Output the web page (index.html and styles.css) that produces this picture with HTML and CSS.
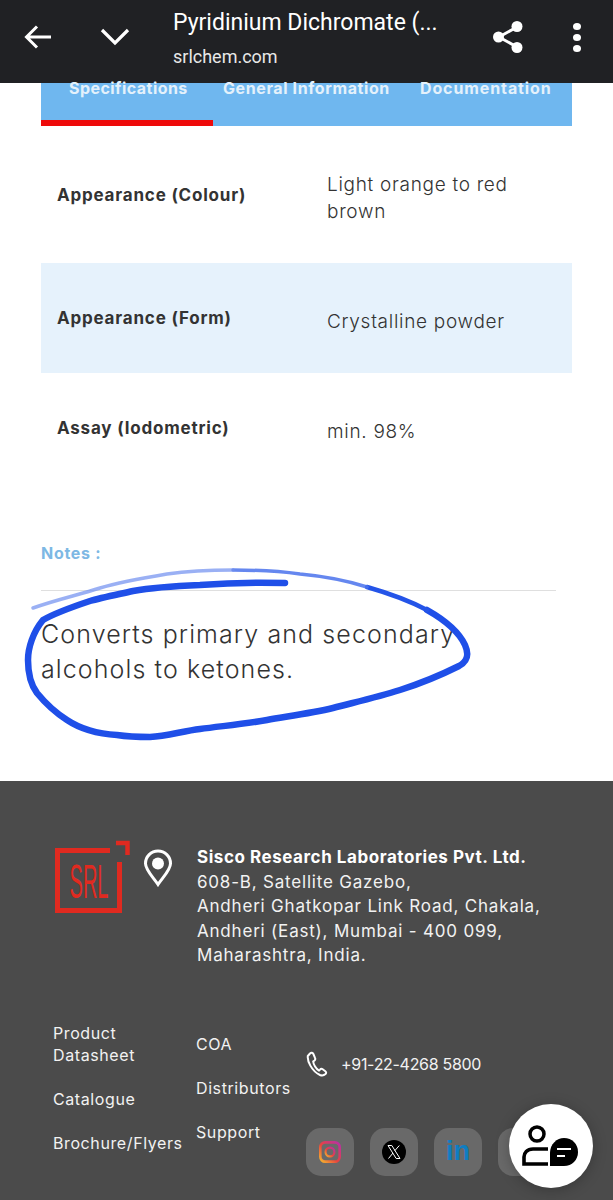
FILE: index.html
```html
<!DOCTYPE html>
<html>
<head>
    <meta charset="UTF-8">
    <meta name="viewport" content="width=device-width, initial-scale=1.0">
    <title>Pyridinium Dichromate</title>
    <link rel="stylesheet" href="styles.css">
</head>
<body>
    <!-- browser toolbar -->
    <header class="toolbar">
        <svg class="tool-back" width="30" height="30" viewBox="0 0 30 30"><path d="M27 15H3M13 4.500 2.500 15 13 25.500" fill="none" stroke="#fff" stroke-width="3"/></svg>
        <svg class="tool-chevron" width="30" height="20" viewBox="0 0 30 20"><path d="M2 3 15 16 28 3" fill="none" stroke="#fff" stroke-width="3.200"/></svg>
        <div class="tool-title">
            <div class="tool-name">Pyridinium Dichromate (...</div>
            <div class="tool-host">srlchem.com</div>
        </div>
        <svg class="tool-share" width="32" height="34" viewBox="0 0 32 34"><path d="M25 7 7 17 25 27" fill="none" stroke="#fff" stroke-width="3"/><circle cx="25" cy="6.500" r="5.500" fill="#fff"/><circle cx="6.500" cy="17" r="5.500" fill="#fff"/><circle cx="25" cy="27.500" r="5.500" fill="#fff"/></svg>
        <div class="tool-dots"><i></i><i></i><i></i></div>
    </header>

    <main class="content">
        <nav class="tabs">
            <a class="tab tab-active">Specifications</a>
            <a class="tab tab-info">General Information</a>
            <a class="tab tab-docs">Documentation</a>
        </nav>

        <div class="spec-row spec-first">
            <div class="spec-label">Appearance (Colour)</div>
            <div class="spec-value">Light orange to red brown</div>
        </div>
        <div class="spec-row spec-alt">
            <div class="spec-label">Appearance (Form)</div>
            <div class="spec-value">Crystalline powder</div>
        </div>
        <div class="spec-row">
            <div class="spec-label">Assay (Iodometric)</div>
            <div class="spec-value">min. 98%</div>
        </div>

        <section class="notes">
            <h4>Notes :</h4>
            <p>Converts primary and secondary alcohols to ketones.</p>
        </section>
    </main>

    <footer class="footer">
        <div class="foot-top">
            <svg class="logo" width="78" height="76" viewBox="0 0 78 76">
                <path d="M57 10.500H4.500V70.500H66.500V22" fill="none" stroke="#e02a20" stroke-width="5"/>
                <path d="M63 3H74.500V15" fill="none" stroke="#e02a20" stroke-width="4.500"/>
                <text class="logo-text" x="36" y="24" text-anchor="middle" transform="scale(1 2.400)">SRL</text>
            </svg>
            <svg class="pin" width="30" height="38" viewBox="0 0 30 38"><path d="M15 35.500C10 28 2.500 21 2.500 14.500a12.500 12.500 0 0 1 25 0C27.500 21 20 28 15 35.500Z" fill="none" stroke="#fff" stroke-width="3"/><circle cx="15" cy="14.500" r="6" fill="#fff"/></svg>
            <address class="address">
                <strong>Sisco Research Laboratories Pvt. Ltd.</strong>
                608-B, Satellite Gazebo,<br>
                Andheri Ghatkopar Link Road, Chakala,<br>
                Andheri (East), Mumbai - 400 099,<br>
                Maharashtra, India.
            </address>
        </div>

        <div class="foot-bottom">
            <div class="links links-one">
                <a>Product<br>Datasheet</a>
                <a>Catalogue</a>
                <a>Brochure/Flyers</a>
            </div>
            <div class="links links-two">
                <a>COA</a>
                <a>Distributors</a>
                <a>Support</a>
            </div>
            <div class="contact">
                <div class="phone">
                    <svg width="22" height="26" viewBox="0 0 22 26"><path d="M4 2.500 1.800 5C1.200 10 5.500 20 14 24c2 .8 4 .4 5.500-1 1-1 .8-2-.2-2.800l-2.600-1.900c-1-.7-2-.5-2.700.3l-1 1C10 18 7.500 13.500 7.200 10.500l1.300-1c.8-.7 1-1.600.5-2.600L7.400 3C6.700 1.700 5.200 1.400 4 2.500Z" fill="none" stroke="#fff" stroke-width="2"/></svg>
                    <span>+91-22-4268 5800</span>
                </div>
                <div class="socials">
                    <a class="social">
                        <svg width="22" height="22" viewBox="0 0 20 20">
                            <defs><linearGradient id="insta" x1="0" y1="1" x2="1" y2="0"><stop offset="0" stop-color="#f5b52e"/><stop offset=".45" stop-color="#e8433f"/><stop offset="1" stop-color="#b72fa8"/></linearGradient></defs>
                            <rect x="1.200" y="1.200" width="17.600" height="17.600" rx="4.500" fill="none" stroke="url(#insta)" stroke-width="2.400"/>
                            <circle cx="10" cy="10" r="4" fill="none" stroke="url(#insta)" stroke-width="2"/>
                        </svg>
                    </a>
                    <a class="social">
                        <svg width="24" height="24" viewBox="0 0 24 24"><circle cx="12" cy="12" r="12" fill="#000"/><path d="M6 5.500h3.800l8.200 13h-3.800ZM17.300 5.500 12.700 10.800M11 13l-4.500 5.500" fill="none" stroke="#fff" stroke-width="1"/></svg>
                    </a>
                    <a class="social social-in">in</a>
                    <a class="social"></a>
                </div>
            </div>
        </div>
    </footer>

    <!-- pen scribble over the notes -->
    <svg class="scribble" width="613" height="200" viewBox="0 560 613 200">
        <path d="M285 583C250 582 225 583 200 585C175 586 155 587 133 591C115 595 100 598 90 601C72 607 55 613 43 620C33 632 28 648 28 660C28 675 31 685 37 693C46 704 56 713 67 720C82 730 100 734 117 735C130 737 140 737 150 737C167 736 183 731 200 729C222 726 245 724 267 720C290 716 312 713 333 708C356 702 378 697 400 690C422 683 445 673 459 666C468 661 469 654 465 645C458 630 443 619 427 610" fill="none" stroke="#1f4fe8" stroke-width="6.500" stroke-linecap="round" stroke-linejoin="round"/>
        <path d="M427 610C408 600 388 593 367 587" fill="none" stroke="#2454e8" stroke-width="4.500" stroke-linecap="round"/>
        <path d="M367 587C345 580 322 576 300 574C278 571 255 570 233 570" fill="none" stroke="#4a72ec" stroke-width="3.500" stroke-linecap="round" opacity=".85"/>
        <path d="M233 570C210 570 188 571 167 574C143 578 120 582 100 588C78 595 55 600 33 608" fill="none" stroke="#6f8ff0" stroke-width="3.500" stroke-linecap="round" opacity=".7"/>
    </svg>

    <div class="chat-btn">
        <svg width="58" height="44" viewBox="0 0 58 44">
            <circle cx="15" cy="10" r="7" fill="none" stroke="#000" stroke-width="3.500"/>
            <path d="M26 25H11C5 25 2 29 2 33V40H26" fill="none" stroke="#000" stroke-width="3.600"/>
            <path d="M28 42V29C28 20 35 14 42 14C50 14 56 20 56 28C56 36 50 42 42 42Z" fill="#000"/>
            <path d="M35 25H49M35 32H43" stroke="#fff" stroke-width="2.200"/>
        </svg>
    </div>
</body>
</html>
```

FILE: styles.css
```css
html, body {
    margin: 0;
    padding: 0;
}

body {
    position: relative;
    width: 613px;
    height: 1200px;
    overflow: hidden;
    background: #fff;
    font-family: Inter, "Open Sans", sans-serif;
    color: #333;
}

.toolbar {
    display: flex;
    align-items: center;
    box-sizing: border-box;
    height: 83px;
    padding: 0 0 9px 24px;
    background: #202124;
    color: #fff;
    font-family: Roboto, sans-serif;
}

.tool-back {
    margin-right: 46px;
}

.tool-chevron {
    margin-right: 43px;
}

.tool-title {
    width: 319px;
    margin-top: 9px;
}

.tool-name {
    font-size: 23px;
    line-height: 28px;
    margin-top: -6px;
}

.tool-host {
    font-size: 18px;
    line-height: 24px;
    margin-top: 8px;
    color: #e8e8e8;
}

.tool-dots {
    display: flex;
    flex-direction: column;
    gap: 4px;
    margin-left: 49px;
}

.tool-dots i {
    width: 8px;
    height: 7px;
    border-radius: 50%;
    background: #fff;
}

.content {
    padding: 0 41px;
}

.tabs {
    display: flex;
    height: 43px;
    background: #6fb7ef;
    font-size: 16px;
    font-weight: 700;
    letter-spacing: 0.6px;
    color: #e4f1fb;
}

.tab {
    display: block;
    line-height: 10px;
    white-space: nowrap;
}

.tab-active {
    width: 172px;
    height: 43px;
    padding-left: 28px;
    box-sizing: border-box;
    border-bottom: 6px solid #ee0a0a;
    letter-spacing: 0.45px;
}

.tab-info {
    margin-left: 10px;
}

.tab-docs {
    margin-left: 30px;
    letter-spacing: 0.9px;
}

.spec-row {
    display: flex;
    align-items: center;
    height: 110px;
}

.spec-first {
    height: 137px;
}

.spec-alt {
    background: #e6f2fc;
}

.spec-label {
    width: 286px;
    padding-left: 16px;
    box-sizing: border-box;
    font-size: 17px;
    font-weight: 700;
    letter-spacing: 0.8px;
    color: #333;
}

.spec-value {
    width: 220px;
    padding-top: 6px;
    font-size: 19px;
    line-height: 27px;
    font-weight: 300;
    letter-spacing: 0.7px;
    color: #333;
}

.notes {
    width: 515px;
    margin-top: 60px;
}

.notes h4 {
    margin: 0;
    padding-bottom: 27px;
    border-bottom: 1px solid #dfdfdf;
    font-size: 16px;
    line-height: 20px;
    font-weight: 700;
    letter-spacing: 0.7px;
    color: #7db8e4;
}

.notes p {
    width: 430px;
    margin: 26px 0 0;
    font-size: 25px;
    line-height: 35px;
    font-weight: 300;
    letter-spacing: 1.1px;
    color: #333;
}

.footer {
    position: absolute;
    left: 0;
    right: 0;
    top: 781px;
    bottom: 0;
    background: #4b4b4b;
    color: #f2f2f2;
}

.foot-top {
    display: flex;
    align-items: flex-start;
    padding: 59px 0 0 53px;
}

.pin {
    margin: 9px 0 0 12px;
}

.address {
    margin: 5px 0 0 24px;
    font-style: normal;
    font-size: 17px;
    line-height: 24.600px;
    font-weight: 400;
    letter-spacing: 0.8px;
}

.address strong {
    display: block;
    font-weight: 700;
    letter-spacing: 0.55px;
    color: #fff;
}

.logo-text {
    font-family: "Liberation Sans", sans-serif;
    font-size: 20px;
    fill: #e02a20;
}

.foot-bottom {
    display: flex;
    align-items: flex-start;
    margin-top: 54px;
    padding-left: 53px;
}

.links {
    display: flex;
    flex-direction: column;
    font-size: 16px;
    line-height: 22px;
    letter-spacing: 0.6px;
}

.links-one {
    width: 143px;
    gap: 22px;
}

.links-two {
    width: 110px;
    gap: 22px;
    padding-top: 11px;
}

.phone {
    display: flex;
    align-items: center;
    gap: 13px;
    margin-top: 29px;
    font-size: 16px;
    letter-spacing: -0.3px;
}

.socials {
    display: flex;
    gap: 16px;
    margin-top: 51px;
}

.social {
    display: flex;
    align-items: center;
    justify-content: center;
    width: 48px;
    height: 48px;
    border-radius: 15px;
    background: #696969;
}

.social-in {
    font-family: "Liberation Sans", sans-serif;
    font-size: 27px;
    font-weight: 700;
    color: #0f7dc2;
}

.scribble {
    position: absolute;
    left: 0;
    top: 560px;
}

.chat-btn {
    position: absolute;
    left: 509px;
    top: 1104px;
    display: flex;
    align-items: center;
    justify-content: center;
    width: 84px;
    height: 84px;
    border-radius: 50%;
    background: #fff;
    box-shadow: 0 2px 14px rgba(0,0,0,0.25);
}
```
